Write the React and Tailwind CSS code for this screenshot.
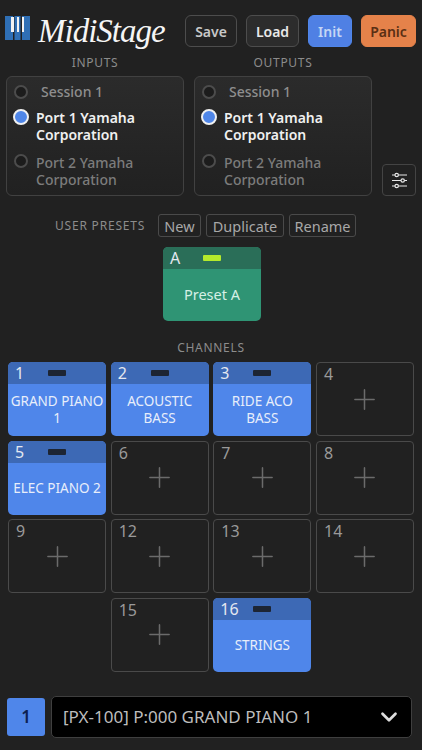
import { ChevronDown, Plus } from 'lucide-react';

const font = { fontFamily: '"Noto Sans", sans-serif' };

const PianoLogo = () => (
  <svg width="25" height="24" viewBox="0 0 25 24" className="shrink-0 -mt-[6px]">
    <rect x="0" y="0" width="8" height="24" fill="#2f6fb5" />
    <rect x="9.5" y="0" width="6" height="24" fill="#2f6fb5" />
    <rect x="17" y="0" width="8" height="24" fill="#2f6fb5" />
    <rect x="6" y="1" width="3" height="15" fill="#f2f2f2" />
    <rect x="12" y="1" width="2" height="15" fill="#f2f2f2" />
    <rect x="17" y="1" width="2" height="15" fill="#f2f2f2" />
  </svg>
);

const SlidersIcon = () => (
  <svg width="17" height="17" viewBox="0 0 17 17" fill="none" stroke="#e8e8e8" strokeWidth="1.2">
    <path d="M1 3h3M7.5 3H16M1 8.5h9M13.5 8.5H16M1 14h3M7.5 14H16" />
    <circle cx="5.7" cy="3" r="1.7" />
    <circle cx="11.7" cy="8.5" r="1.7" />
    <circle cx="5.7" cy="14" r="1.7" />
  </svg>
);

const Radio = ({ checked }) => (
  checked ? (
    <span className="block w-4 h-4 shrink-0 rounded-full bg-[#4f86e8] border-[2.5px] border-[#f0f0f0]" />
  ) : (
    <span className="block w-[14px] h-[14px] ml-px shrink-0 rounded-full bg-[#1c1c1c] border-2 border-[#4c4c4c]" />
  )
);

const PortBox = ({ title }) => (
  <div className="w-[178px]">
    <div className="text-center text-[12px] leading-[16px] tracking-[0.7px] text-[#8c8c8c]">{title}</div>
    <div className="mt-[5px] h-[120px] rounded-md border border-[#414141] bg-gradient-to-b from-[#2b2b2b] to-[#212121] pl-[6px] pr-2 pt-[6px]">
      <div className="flex items-center h-[17px] text-[14px] font-medium text-[#8e8e8e]">
        <Radio />
        <span className="ml-[13px] leading-[17px]">Session 1</span>
      </div>
      <div className="flex mt-[9px] text-[14px] font-semibold text-[#f0f0f0]">
        <Radio checked />
        <span className="ml-[7px] leading-[17px]">Port 1 Yamaha<br />Corporation</span>
      </div>
      <div className="flex mt-[11px] text-[14px] font-medium text-[#7c7c7c]">
        <Radio />
        <span className="ml-[8px] leading-[17px]">Port 2 Yamaha<br />Corporation</span>
      </div>
    </div>
  </div>
);

const HeadButton = ({ className, children }) => (
  <button className={`h-8 rounded-md border text-[14px] font-semibold ${className}`}>{children}</button>
);

const SmallButton = ({ className, children }) => (
  <button className={`h-[23px] rounded-[3px] border border-[#4a4a4a] text-[14.5px] leading-[20px] text-[#a8a8a8] ${className}`}>{children}</button>
);

const TileHeader = ({ num, className, led }) => (
  <div className={`h-[22px] flex items-center pl-[7px] relative ${className}`}>
    <span className="text-[16px] leading-[20px] text-[#e4e8f0]">{num}</span>
    <span className={`absolute left-[40px] top-[8px] w-[18px] h-[6px] rounded-[1px] ${led}`} />
  </div>
);

const ChannelTile = ({ num, name }) => {
  if (!name) {
    return (
      <div className="h-[74px] rounded-[4px] border border-[#4a4a4a] relative">
        <span className="absolute left-[7px] top-[1px] text-[16px] leading-[20px] text-[#9a9a9a]">{num}</span>
        <div className="h-full flex items-center justify-center">
          <Plus size={33} strokeWidth={1.1} color="#6b6b6b" />
        </div>
      </div>
    );
  }
  return (
    <div className="h-[74px] rounded-[5px] overflow-hidden bg-[#4f86ea] flex flex-col">
      <TileHeader num={num} className="bg-[#3d69b5]" led="bg-[#1d2533]" />
      <div className="flex-1 flex items-center justify-center text-center px-px text-[13.5px] leading-[17px] text-[#e8eefa]">
        {name}
      </div>
    </div>
  );
};

export default function App() {
  return (
    <div style={font} className="w-[422px] h-[750px] bg-[#212121] overflow-hidden flex flex-col">
      {/* Header */}
      <div className="flex items-center h-8 mt-[15px] pl-[5px]">
        <PianoLogo />
        <span
          style={{ fontFamily: '"Liberation Serif", serif' }}
          className="ml-[8px] w-[124px] text-[33px] leading-8 italic text-[#f5f5f5] tracking-[-1px] whitespace-nowrap"
        >
          MidiStage
        </span>
        <div className="flex gap-[9px] ml-[23px]">
          <HeadButton className="w-[52px] border-[#4d4d4d] text-[#c8c8c8] bg-[#232323]">Save</HeadButton>
          <HeadButton className="w-[53px] border-[#4d4d4d] text-[#e8e8e8] bg-[#2c2c2c]">Load</HeadButton>
          <HeadButton className="w-[44px] border-[#4f86ea] text-[#c4d6f5] bg-[#4f80e4]">Init</HeadButton>
          <HeadButton className="w-[55px] border-[#e5824a] text-[#5a2f14] bg-[#e5824a]">Panic</HeadButton>
        </div>
      </div>

      {/* Ports */}
      <div className="flex items-end mt-[8px] pl-[6px]">
        <PortBox title="INPUTS" />
        <div className="ml-[10px]"><PortBox title="OUTPUTS" /></div>
        <button className="ml-[10px] w-[34px] h-[32px] rounded-[4px] border border-[#444444] flex items-center justify-center">
          <SlidersIcon />
        </button>
      </div>

      {/* User presets */}
      <div className="flex items-center mt-[18px] pl-[55px]">
        <span className="w-[103px] whitespace-nowrap text-[12px] tracking-[0.8px] text-[#8c8c8c]">USER PRESETS</span>
        <div className="flex gap-[5px]">
          <SmallButton className="w-[43px]">New</SmallButton>
          <SmallButton className="w-[78px]">Duplicate</SmallButton>
          <SmallButton className="w-[67px]">Rename</SmallButton>
        </div>
      </div>

      <div className="mt-[10px] ml-[163px] w-[98px] h-[74px] rounded-[5px] overflow-hidden bg-[#2f9474] flex flex-col">
        <TileHeader num="A" className="bg-[#2a6e58]" led="bg-[#b5ea2c]" />
        <div className="flex-1 flex items-center justify-center text-[14.5px] text-[#d6f0e6]">Preset A</div>
      </div>

      {/* Channels */}
      <div className="mt-[19px] text-center text-[12px] leading-[16px] tracking-[0.7px] text-[#8c8c8c]">CHANNELS</div>
      <div className="mt-[6px] ml-2 w-[406px] grid grid-cols-4 gap-[4.67px]">
        <ChannelTile num="1" name="GRAND PIANO 1" />
        <ChannelTile num="2" name="ACOUSTIC BASS" />
        <ChannelTile num="3" name="RIDE ACO BASS" />
        <ChannelTile num="4" />
        <ChannelTile num="5" name="ELEC PIANO 2" />
        <ChannelTile num="6" />
        <ChannelTile num="7" />
        <ChannelTile num="8" />
        <ChannelTile num="9" />
        <ChannelTile num="12" />
        <ChannelTile num="13" />
        <ChannelTile num="14" />
        <div className="col-start-2"><ChannelTile num="15" /></div>
        <ChannelTile num="16" name="STRINGS" />
      </div>

      {/* Bottom selector */}
      <div className="flex items-center mt-[24px] pl-[7px]">
        <div className="w-[38px] h-[38px] rounded-[3px] bg-[#4f86ea] flex items-center justify-center text-[17px] font-semibold text-[#0d1f52]">1</div>
        <div className="ml-[6px] w-[361px] h-[42px] rounded-[5px] border border-[#3f3f3f] bg-black flex items-center justify-between pl-[11px] pr-[9px]">
          <span className="text-[17px] text-[#bdbdbd]">[PX-100] P:000 GRAND PIANO 1</span>
          <ChevronDown size={26} strokeWidth={2.5} color="#dddddd" />
        </div>
      </div>
    </div>
  );
}
